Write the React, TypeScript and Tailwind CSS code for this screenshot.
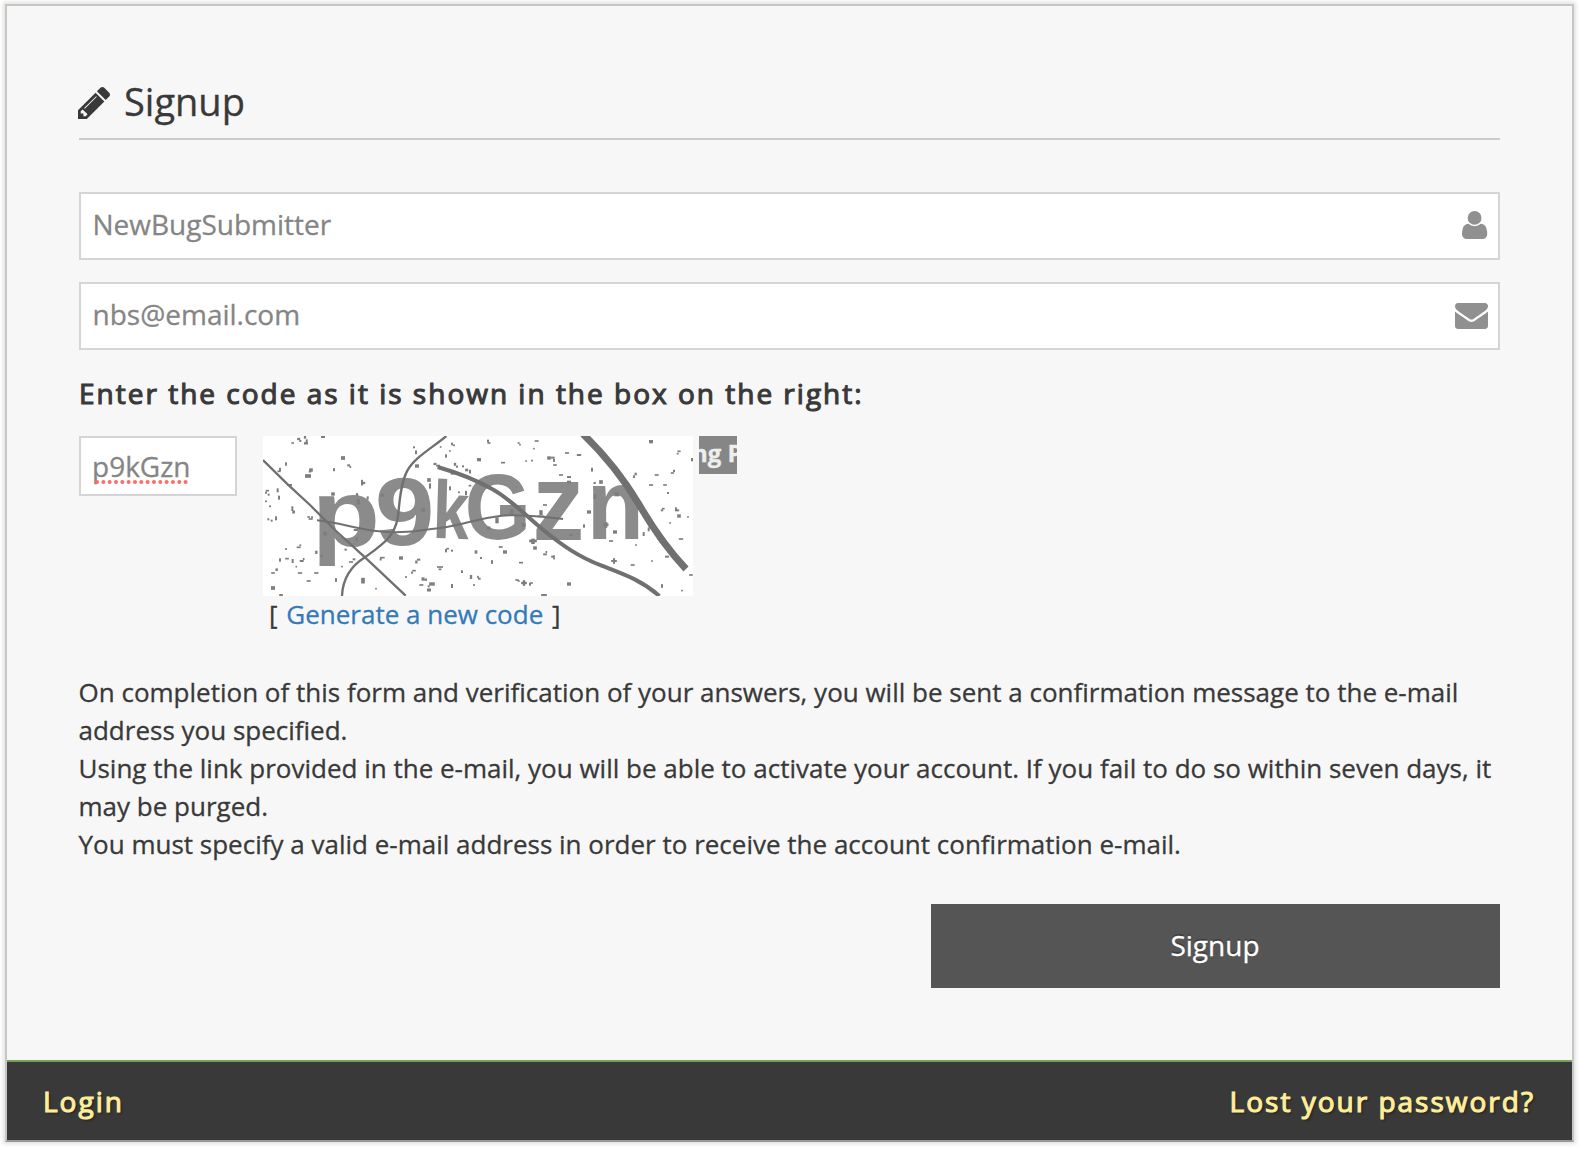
import React from 'react';

type Speck = [number, number, number, number];

// Noise specks of the left and right captcha halves: centre x, centre y, width, height.
const leftSpecks: Speck[] = [
  [113, 54, 8, 5], [131, 42, 9, 7], [136, 48, 6, 6], [150, 37, 7, 8], [153, 55, 12, 7], [155, 50, 6, 14], [204, 36, 12, 6],
  [264, 99, 12, 11], [93, 117, 6, 10], [75, 134, 6, 11], [72, 139, 9, 5], [168, 135, 11, 10], [165, 140, 8, 5], [159, 153, 18, 11], [237, 134, 6, 9],
  [281, 121, 9, 6], [286, 126, 5, 6], [321, 173, 6, 17], [327, 174, 7, 7], [234, 207, 11, 10], [104, 180, 14, 6], [37, 197, 10, 5], [33, 203, 6, 6], [41, 209, 6, 6],
  [68, 196, 6, 12], [72, 218, 6, 12], [33, 229, 6, 5], [45, 244, 6, 5], [112, 251, 6, 14], [116, 261, 8, 9], [40, 283, 6, 6], [50, 287, 6, 6], [63, 280, 6, 12],
  [161, 276, 8, 5], [167, 282, 12, 5], [171, 277, 6, 6], [136, 361, 6, 5], [131, 367, 12, 5], [93, 372, 5, 6], [75, 405, 6, 10], [96, 401, 11, 5], [113, 408, 6, 12], [124, 425, 5, 5], [140, 408, 12, 6], [146, 402, 5, 6],
  [65, 434, 7, 8], [54, 444, 11, 5], [135, 444, 13, 5], [184, 444, 13, 5], [161, 468, 12, 5], [54, 489, 12, 11], [78, 510, 11, 6], [243, 465, 6, 11], [261, 425, 5, 5], [288, 411, 12, 5], [297, 403, 8, 6],
  [324, 467, 11, 17], [363, 491, 5, 5], [382, 398, 14, 5], [377, 403, 6, 7], [438, 399, 12, 10], [484, 411, 7, 9], [491, 404, 10, 6], [453, 456, 6, 5], [477, 437, 11, 5], [471, 443, 6, 6],
  [504, 462, 9, 10], [512, 464, 8, 7], [499, 480, 12, 5], [531, 477, 17, 10], [522, 495, 12, 9], [521, 484, 6, 6], [555, 426, 18, 5], [555, 433, 9, 5], [573, 377, 6, 10], [578, 371, 8, 5], [591, 377, 6, 6], [621, 440, 6, 8], [591, 483, 6, 12], [648, 456, 7, 12], [657, 480, 6, 5],
  [477, 67, 6, 6], [483, 82, 6, 11], [486, 123, 12, 10], [557, 66, 5, 5], [591, 57, 6, 8], [597, 61, 6, 5], [585, 78, 5, 5], [573, 93, 6, 10], [540, 117, 9, 7], [549, 122, 11, 6],
  [600, 118, 7, 9], [606, 125, 6, 6], [624, 124, 6, 6], [635, 135, 9, 8], [645, 140, 6, 11], [594, 146, 14, 6], [522, 165, 11, 11], [525, 183, 6, 16], [585, 190, 6, 12], [612, 202, 6, 5], [633, 204, 6, 13], [645, 182, 8, 5],
  [306, 209, 7, 9], [338, 219, 6, 10], [310, 230, 10, 16], [382, 211, 11, 9], [505, 255, 11, 11], [210, 326, 11, 11], [305, 343, 6, 12], [184, 382, 7, 10], [200, 393, 7, 8], [272, 374, 7, 6], [303, 315, 14, 6],
];
const rightSpecks: Speck[] = [
  [39, 48, 6, 8], [42, 54, 9, 5], [12, 104, 12, 10], [84, 113, 12, 5], [131, 54, 6, 5], [135, 59, 5, 5], [185, 48, 12, 5], [177, 71, 5, 5], [153, 108, 5, 5], [171, 107, 5, 6],
  [276, 84, 12, 5], [222, 99, 11, 10], [233, 98, 12, 6], [237, 106, 6, 9], [240, 120, 11, 5], [312, 90, 13, 6], [528, 50, 12, 10], [612, 79, 10, 5], [608, 86, 6, 5], [651, 104, 6, 10],
  [351, 134, 6, 11], [258, 150, 12, 5], [282, 156, 12, 6], [282, 171, 12, 8], [378, 171, 11, 11], [359, 174, 7, 6], [482, 147, 7, 8], [477, 155, 6, 8], [545, 150, 12, 5], [597, 138, 6, 7], [592, 144, 9, 5],
  [528, 180, 12, 5], [570, 180, 11, 5], [579, 204, 6, 6], [565, 251, 8, 5], [561, 256, 7, 6], [603, 253, 6, 12], [609, 256, 7, 6], [612, 273, 11, 10], [639, 276, 5, 5], [585, 294, 5, 5],
  [210, 240, 12, 5], [198, 263, 10, 15], [198, 274, 21, 5], [342, 261, 12, 10], [327, 303, 6, 10], [420, 321, 12, 10], [392, 299, 17, 8], [393, 300, 8, 17], [408, 348, 12, 5], [483, 360, 5, 5],
  [506, 327, 6, 12], [521, 313, 6, 12], [549, 339, 6, 10], [618, 342, 13, 5], [576, 395, 12, 6], [531, 408, 5, 5], [473, 420, 12, 5], [417, 408, 17, 6], [417, 408, 6, 17],
  [174, 348, 23, 8], [174, 349, 11, 16], [180, 369, 11, 10], [77, 366, 12, 5], [90, 381, 12, 10], [3, 381, 8, 10], [18, 399, 6, 6], [51, 411, 6, 11], [138, 413, 12, 5], [210, 388, 11, 6], [214, 381, 5, 6],
  [233, 395, 9, 6], [237, 397, 5, 13], [9, 456, 5, 7], [13, 461, 8, 6], [126, 465, 10, 5], [131, 468, 6, 5], [147, 474, 17, 7], [147, 474, 7, 17], [165, 478, 6, 8], [169, 474, 9, 5],
  [282, 477, 12, 10], [207, 510, 17, 6], [561, 483, 6, 11], [621, 497, 5, 5], [648, 450, 11, 5], [66, 286, 10, 18], [110, 262, 11, 20], [41, 309, 11, 9], [146, 300, 12, 11], [288, 330, 11, 6], [425, 208, 14, 12], [360, 215, 9, 14],
];

function Specks({ items }: { items: Speck[] }) {
  return (
    <>
      {items.map(([x, y, w, h], i) => (
        <rect key={i} x={x - w / 2} y={y - h / 2} width={w} height={h} fill="#7e7e7e" />
      ))}
    </>
  );
}

function Captcha() {
  return (
    <svg className="block h-[160px] w-[430px] bg-white" viewBox="24 33 1290 480">
      <g fill="#8b8b8b" fontFamily="Liberation Sans" fontWeight="700">
        <text transform="translate(170 362) scale(1.18 1)" fontSize="284">p</text>
        <text transform="translate(359 359) scale(1.12 1)" fontSize="288">9</text>
        <text transform="translate(531 338) scale(.8 1) rotate(2)" fontSize="246">k</text>
        <text transform="translate(629 341) scale(.92 1)" fontSize="277">G</text>
        <text transform="translate(832 345) scale(.95 1)" fontSize="330">z</text>
        <text transform="translate(995 343) scale(.93 1)" fontSize="302">n</text>
      </g>
      <Specks items={leftSpecks} />
      <g transform="translate(660 0)">
        <Specks items={rightSpecks} />
      </g>
      <g fill="none" stroke="#707070">
        <path d="M24 105 L98 178 L165 240 L240 315 L330 397 L452 512" strokeWidth="7" />
        <path d="M574 33 C530 70 478 98 457 137 C434 180 434 240 428 280 C418 335 385 356 330 397 C285 425 263 462 261 513" strokeWidth="7" />
        <path d="M186 286 C250 292 310 313 372 319 C440 327 500 316 560 308 C620 300 670 280 740 272 C800 266 860 275 924 282" strokeWidth="6" />
        <path d="M548 126 C610 144 660 163 707 190 C765 220 810 270 865 315 C920 360 970 395 1040 422 C1110 449 1160 466 1213 513" strokeWidth="12" />
        <path d="M984 27 C1060 100 1110 168 1150 235 C1190 304 1230 365 1293 432" strokeWidth="21" />
      </g>
    </svg>
  );
}

function PencilIcon() {
  return (
    <svg className="h-8 w-8 shrink-0" viewBox="0 149 1515 1515" fill="currentColor">
      <path d="M363 1536l91-91-235-235-91 91v107h128v128h107zM886 608q0-22-22-22-10 0-17 7l-542 542q-7 7-7 17 0 22 22 22 10 0 17-7l542-542q7-7 7-17zM832 416l416 416-832 832h-416v-416zM1515 512q0 53-37 90l-166 166-416-416 166-165q36-38 90-38 53 0 91 38l235 234q37 39 37 91z" />
    </svg>
  );
}

function UserIcon() {
  return (
    <svg className="h-[28px] w-[26px] shrink-0" viewBox="0 0 26 28" fill="#909090">
      <circle cx="12.6" cy="6.9" r="6.9" />
      <path transform="translate(-5.04 -2.33) scale(.0197 .01823)" d="M1536 1399q0 109-62.5 187t-150.5 78h-854q-88 0-150.5-78t-62.5-187q0-85 8.5-160.5t31.5-152 58.5-131 94-89 134.5-34.5q131 128 313 128t313-128q76 0 134.5 34.5t94 89 58.5 131 31.5 152 8.5 160.5z" />
    </svg>
  );
}

function EnvelopeIcon() {
  return (
    <svg className="mt-0.5 h-[26px] w-[33px] shrink-0" viewBox="0 256 1792 1408" fill="#909090">
      <path d="M1792 710v794q0 66-47 113t-113 47h-1472q-66 0-113-47t-47-113v-794q44 49 101 87 362 246 497 345 57 42 92.5 65.5t94.5 48 110 24.5h2q51 0 110-24.5t94.5-48 92.5-65.5q170-123 498-345 57-39 100-87zM1792 416q0 79-49 151t-122 123q-376 261-468 325-10 7-42.5 31t-54 38.5-52 32.5-57.5 27-50 9h-2q-23 0-50-9t-57.5-27-52-32.5-54-38.5-42.5-31q-91-64-262-182.5t-205-142.5q-62-42-117-115.5t-55-136.5q0-78 41.5-130t118.5-52h1472q65 0 112.5 47t47.5 113z" />
    </svg>
  );
}

function Field({ value, icon }: { value: string; icon: React.ReactNode }) {
  return (
    <div className="flex h-[68px] items-center justify-between border-2 border-[#d5d5d5] bg-white pr-2.5 pb-[3px] pl-[11.5px] text-[28px] text-[#858585]">
      <span className="pb-0.5">{value}</span>
      {icon}
    </div>
  );
}

export default function App() {
  return (
    <div className="h-[1150px] overflow-hidden bg-white pt-1 pl-[5px] font-['Open_Sans',sans-serif] text-[#393939] [-webkit-text-stroke:0.3px]">
      <div className="flex h-[1138px] w-[1569px] flex-col border-2 border-[#c6c7c1] border-b-[#989893] bg-[#f7f7f7] shadow-[0_0_4px_2px_rgba(0,0,0,0.12)]">
        <main className="flex grow flex-col px-[72px] pt-[60px]">
          <h1 className="-ml-px flex h-[74px] items-center text-[38px] leading-none">
            <PencilIcon />
            <span className="ml-3.5 pb-1">Signup</span>
          </h1>
          <div className="-mt-0.5 h-0.5 shrink-0 bg-[#cccccc]" />
          <div className="mt-[52px] flex flex-col gap-[22px]">
            <Field value="NewBugSubmitter" icon={<UserIcon />} />
            <Field value="nbs@email.com" icon={<EnvelopeIcon />} />
          </div>
          <div className="flex h-[86px] items-center text-[28px] tracking-[2px] whitespace-nowrap [-webkit-text-stroke:1.1px_#393939]">
            Enter the code as it is shown in the box on the right:
          </div>
          <div className="flex items-start">
            <div className="flex h-[60px] w-[158px] items-center border-2 border-[#d5d5d5] bg-white pl-[11px] text-[28px] text-[#858585]">
              <span className="relative">
                p9kGzn
                <svg className="absolute top-[35px] left-[3px] h-1 w-[94px]" viewBox="0 0 94 4">
                  <path d="M2 2H92" stroke="#ff6b66" strokeWidth="4" strokeLinecap="round" strokeDasharray="0 6.33" />
                </svg>
              </span>
            </div>
            <div className="ml-[26px] w-[430px]">
              <Captcha />
              <div className="-mt-px pl-1.5 text-[26px] leading-[38px] whitespace-nowrap">
                [ <a className="mx-0.5 text-[#337ab7]">Generate a new code</a> ]
              </div>
            </div>
            <div className="ml-1.5 h-[38px] w-[38px] overflow-hidden bg-[#868686] text-[24px] leading-[33px] font-bold whitespace-nowrap text-[#eeeeee]">
              <span className="-ml-[7px]">ng P</span>
            </div>
          </div>
          <p className="mt-10 mb-px -ml-[0.5px] text-[26px] leading-[38px] whitespace-nowrap">
            On completion of this form and verification of your answers, you will be sent a confirmation message to the e-mail
            <br />
            address you specified.
            <br />
            Using the link provided in the e-mail, you will be able to activate your account. If you fail to do so within seven days, it
            <br />
            may be purged.
            <br />
            You must specify a valid e-mail address in order to receive the account confirmation e-mail.
          </p>
          <button className="mt-10 h-[84px] w-[569px] shrink-0 self-end bg-[#555555] pr-px pb-0.5 text-[28px] text-white [text-shadow:0_-2px_0_rgba(0,0,0,0.25)]">
            Signup
          </button>
        </main>
        <footer className="flex h-[80px] shrink-0 items-center justify-between border-t-2 border-[#76a059] bg-[#393939] pr-[37px] pl-9 text-[28px] tracking-[2px] text-[#ffee99] [-webkit-text-stroke:1.1px_#ffee99] [text-shadow:2px_2px_2px_rgba(0,0,0,0.3)]">
          <a>Login</a>
          <a>Lost your password?</a>
        </footer>
      </div>
    </div>
  );
}
